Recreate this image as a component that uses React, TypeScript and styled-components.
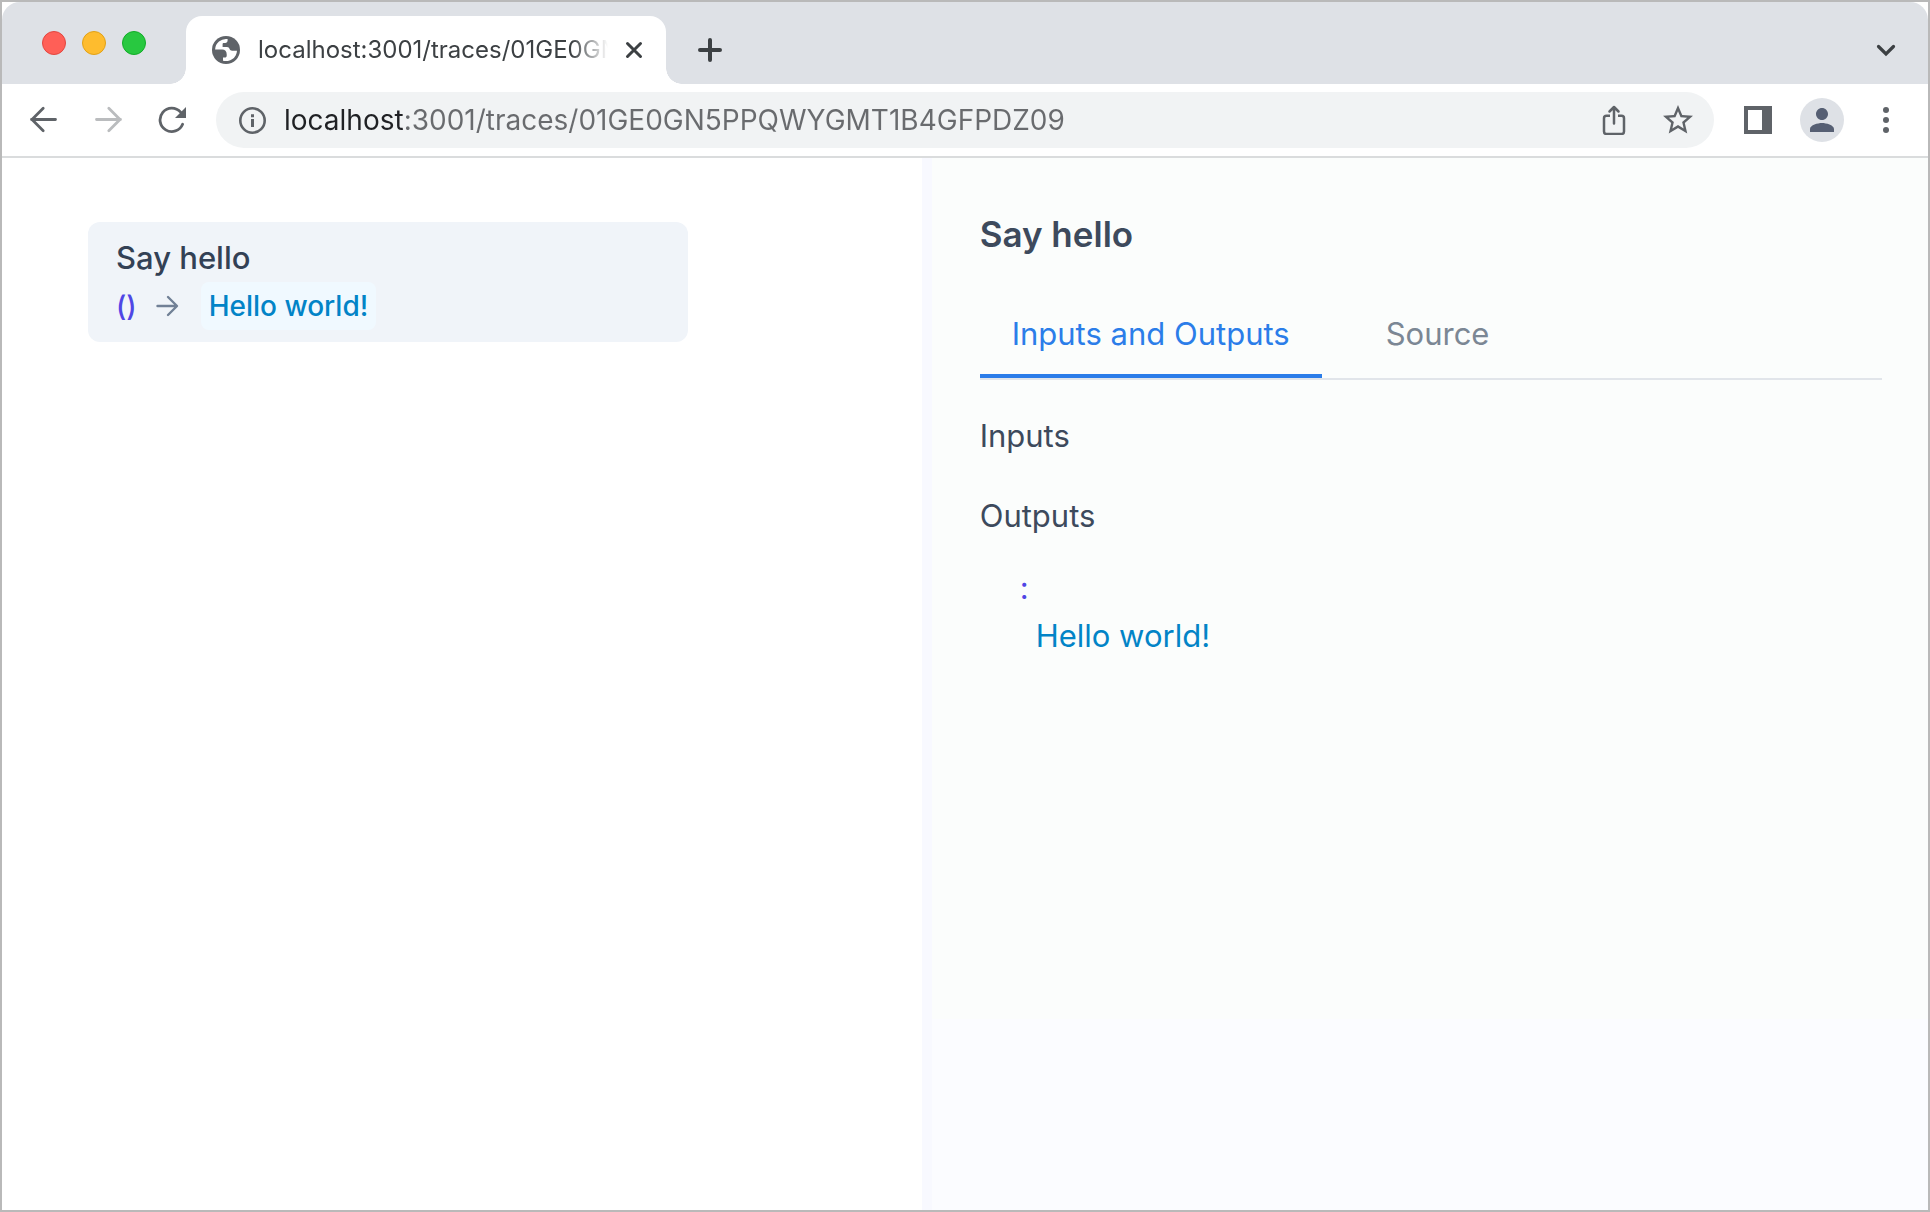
import React, { useState } from 'react';
import styled, { createGlobalStyle } from 'styled-components';
import { MdPerson, MdStarBorder } from 'react-icons/md';

const GlobalStyle = createGlobalStyle`
  *, *::before, *::after { box-sizing: border-box; }
  body {
    margin: 0;
    background: #ffffff;
    font-family: Inter, "Liberation Sans", sans-serif;
  }
  button {
    padding: 0;
    border: 0;
    background: none;
    font: inherit;
    color: inherit;
    cursor: pointer;
  }
  svg { display: block; flex: none; }
`;

const BrowserWindow = styled.div`
  display: flex;
  flex-direction: column;
  min-height: 100vh;
  border: 2px solid #b9b9b9;
  background: #ffffff;
`;

const TabStrip = styled.header`
  display: flex;
  align-items: flex-end;
  height: 82px;
  padding: 0 22px 0 40px;
  border-radius: 18px 18px 0 0;
  background: #dee1e6;
`;

const WindowControls = styled.div`
  display: flex;
  align-items: center;
  align-self: stretch;
  gap: 16px;
  margin-right: 40px;
`;

const WindowButton = styled.button<{ $fill: string; $edge: string }>`
  width: 24px;
  height: 24px;
  border: 1px solid ${(p) => p.$edge};
  border-radius: 50%;
  background: ${(p) => p.$fill};
`;

const BrowserTab = styled.div`
  position: relative;
  display: flex;
  align-items: center;
  width: 480px;
  height: 68px;
  padding: 0 16px 0 26px;
  border-radius: 16px 16px 0 0;
  background: #ffffff;
  color: #3c4043;

  &::before,
  &::after {
    content: "";
    position: absolute;
    bottom: 0;
    width: 16px;
    height: 16px;
  }
  &::before {
    right: 100%;
    background: radial-gradient(circle at 0 0, transparent 15.5px, #ffffff 16px);
  }
  &::after {
    left: 100%;
    background: radial-gradient(circle at 100% 0, transparent 15.5px, #ffffff 16px);
  }
`;

const BrowserTabTitle = styled.span`
  flex: 1;
  min-width: 0;
  margin: 0 10px 0 18px;
  overflow: hidden;
  white-space: nowrap;
  font-size: 24px;
  line-height: 32px;
  mask-image: linear-gradient(to left, transparent, #000 36px);
`;

const IconButton = styled.button<{ $size?: number; $color?: string }>`
  display: flex;
  flex: none;
  align-items: center;
  justify-content: center;
  width: ${(p) => p.$size ?? 40}px;
  height: ${(p) => p.$size ?? 40}px;
  color: ${(p) => p.$color ?? '#5f6368'};
`;

const StripActions = styled.div`
  display: flex;
  flex: 1;
  align-items: center;
  justify-content: space-between;
  height: 68px;
  padding-left: 24px;
`;

const Toolbar = styled.div`
  display: flex;
  align-items: center;
  gap: 24px;
  height: 74px;
  padding: 0 22px;
  border-bottom: 2px solid #dadcdd;
`;

const AddressBar = styled.form`
  display: flex;
  flex: 1;
  align-items: center;
  min-width: 0;
  height: 56px;
  padding: 0 16px 0 22px;
  border-radius: 28px;
  background: #f1f3f4;
  color: #5f6368;
`;

const AddressInput = styled.input`
  flex: 1;
  min-width: 0;
  height: 40px;
  margin: 0 24px 0 16px;
  padding: 0;
  border: 0;
  outline: 0;
  background: linear-gradient(to right, #202124 120px, #696b6e 120px);
  background-clip: text;
  color: transparent;
  font: 28px/40px Inter, "Liberation Sans", sans-serif;
`;

const AddressActions = styled.div`
  display: flex;
  gap: 24px;
`;

const Avatar = styled(IconButton)`
  margin: 0 -2px;
  border-radius: 50%;
  background: #dee1e6;
`;

const Workspace = styled.main`
  display: grid;
  flex: 1;
  grid-template-columns: 12fr 10px 13fr;
`;

const TraceList = styled.section`
  padding: 64px 86px;
`;

const TraceCard = styled.button`
  display: block;
  width: 600px;
  max-width: 100%;
  padding: 12px 28px;
  border-radius: 12px;
  background: #f0f4f9;
  text-align: left;
`;

const TraceName = styled.span`
  display: block;
  color: #334155;
  font-size: 31px;
  font-weight: 500;
  line-height: 48px;
`;

const Signature = styled.span`
  display: flex;
  align-items: center;
  color: #718096;
  font-size: 28px;
  font-weight: 500;
  line-height: 48px;
`;

const Args = styled.span`
  color: #4f46e5;
`;

const ArrowSlot = styled.span`
  margin: 0 22px 0 18px;
`;

const ResultPill = styled.span`
  padding: 0 8px;
  border-radius: 8px;
  background: #f0f9ff;
  color: #0284c7;
`;

const Divider = styled.div`
  background: #f8f9ff;
`;

const DetailColumn = styled.section`
  background: #fbfcff;
`;

const DetailPanel = styled.div`
  min-height: 71vh;
  padding: 48px 46px 32px 48px;
  background: #fbfdfc;
  color: #3d4a5c;
`;

const DetailTitle = styled.h1`
  margin: 0 0 32px;
  font-size: 35px;
  font-weight: 600;
  line-height: 56px;
`;

const TabList = styled.div`
  display: flex;
  gap: 32px;
  border-bottom: 2px solid #e1e5ea;
`;

const DetailTab = styled.button<{ $active: boolean }>`
  padding: 16px 32px;
  border-bottom: 4px solid ${(p) => (p.$active ? '#2b7de9' : 'transparent')};
  color: ${(p) => (p.$active ? '#2b7de9' : '#7b8794')};
  font-size: 31px;
  line-height: 48px;
`;

const TabContent = styled.div`
  font-size: 31px;
  line-height: 48px;
`;

const SectionTitle = styled.h2`
  margin: 32px 0 0;
  font: inherit;
`;

const OutputList = styled.dl`
  margin: 24px 0 0;
  padding-left: 40px;
`;

const OutputName = styled.dt`
  color: #4f46e5;
`;

const OutputValue = styled.dd`
  margin: 0 0 0 16px;
  color: #0284c7;
`;

const GlobeIcon = () => (
  <svg width="28" height="28" viewBox="0 0 28 28" aria-hidden="true">
    <circle cx="14" cy="14" r="14" fill="#5f6368" />
    <path
      fill="#fff"
      d="M3.1 13.6A11 11 0 0 1 15.6 3v1.6c0 1.4-1 2.4-2.4 2.4h-1.400c-.8 0-1.200.5-1.200 1.200v2.800h4.400c1.400 0 2.200.8 2.600 2 .4 1.100 1.300 1.700 2.500 1.700H25A11 11 0 0 1 11 24.700V21.600h1.800c1.200 0 1.900-.8 1.900-1.900v-1.400c0-2.700-1.700-4.700-4.500-4.700z"
    />
  </svg>
);

const CloseIcon = () => (
  <svg width="18" height="18" viewBox="0 0 18 18" stroke="#3c4043" strokeWidth="3" strokeLinecap="round" aria-hidden="true">
    <path d="M2.500 2.500l13 13M15.500 2.500l-13 13" />
  </svg>
);

const PlusIcon = () => (
  <svg width="24" height="24" viewBox="0 0 24 24" stroke="#3c4043" strokeWidth="4" strokeLinecap="round" aria-hidden="true">
    <path d="M12 2v20M2 12h20" />
  </svg>
);

const ChevronIcon = () => (
  <svg width="20" height="14" viewBox="0 0 20 14" fill="none" stroke="#3c4043" strokeWidth="3.200" strokeLinecap="round" aria-hidden="true">
    <path d="M2.500 3.500L10 11l7.500-7.500" />
  </svg>
);

const NavArrow = ({ forward }: { forward?: boolean }) => (
  <svg width="28" height="28" viewBox="0 0 28 28" fill="none" stroke="currentColor" strokeWidth="2.800" strokeLinecap="round" aria-hidden="true">
    <path d={forward ? 'M2.500 13.500h24M14.800 2.300L26 13.500 14.800 24.700' : 'M25.500 13.500h-24M13.200 2.300L2 13.500l11.200 11.200'} />
  </svg>
);

const ReloadIcon = () => (
  <svg width="28" height="28" viewBox="0 0 28 28" aria-hidden="true">
    <path d="M24.600 18.200A11.700 11.700 0 1 1 22.600 6.200" fill="none" stroke="currentColor" strokeWidth="2.800" strokeLinecap="round" />
    <path d="M28 1v11H17z" fill="currentColor" />
  </svg>
);

const InfoIcon = () => (
  <svg width="30" height="30" viewBox="0 0 30 30" aria-hidden="true">
    <circle cx="14.500" cy="15.500" r="12.200" fill="none" stroke="currentColor" strokeWidth="2.600" />
    <path d="M13 9.200h3v3h-3zM13 14h3v8h-3z" fill="currentColor" />
  </svg>
);

const ShareIcon = () => (
  <svg width="30" height="30" viewBox="0 0 30 30" fill="none" stroke="#5f6368" strokeWidth="2.500" strokeLinecap="round" strokeLinejoin="round" aria-hidden="true">
    <path strokeLinecap="butt" d="M11 10.800H7.500a2.500 2.500 0 0 0-2.500 2.500v13.200a2.500 2.500 0 0 0 2.500 2.500h15a2.500 2.500 0 0 0 2.500-2.500V13.300a2.500 2.500 0 0 0-2.500-2.500H19" />
    <path d="M15 18.500V2.500M10.500 6.500L15 2l4.500 4.500" />
  </svg>
);

const SidePanelIcon = () => (
  <svg width="28" height="28" viewBox="0 0 28 28" aria-hidden="true">
    <path fill="currentColor" fillRule="evenodd" d="M0 0h28v28H0zM4 4v20h14V4z" />
  </svg>
);

const MenuIcon = () => (
  <svg width="6" height="26" viewBox="0 0 6 26" fill="currentColor" aria-hidden="true">
    <circle cx="3" cy="3" r="3" />
    <circle cx="3" cy="13" r="3" />
    <circle cx="3" cy="23" r="3" />
  </svg>
);

const ArrowIcon = () => (
  <svg width="24" height="24" viewBox="0 0 24 24" fill="none" stroke="currentColor" strokeWidth="2.400" strokeLinecap="round" strokeLinejoin="round" aria-hidden="true">
    <path d="M2.500 12h19M13 3l9 9-9 9" />
  </svg>
);

const WINDOW_BUTTONS = [
  { label: 'Close window', fill: '#ff5f57', edge: '#e2463f' },
  { label: 'Minimize window', fill: '#febc2e', edge: '#e1a116' },
  { label: 'Zoom window', fill: '#28c840', edge: '#12ac28' },
];

const TRACE_URL = 'localhost:3001/traces/01GE0GN5PPQWYGMT1B4GFPDZ09';

const DETAIL_TABS = ['Inputs and Outputs', 'Source'];

export default function App() {
  const [activeTab, setActiveTab] = useState(DETAIL_TABS[0]);

  return (
    <>
      <GlobalStyle />
      <BrowserWindow>
        <TabStrip>
          <WindowControls>
            {WINDOW_BUTTONS.map((b) => (
              <WindowButton key={b.label} aria-label={b.label} $fill={b.fill} $edge={b.edge} />
            ))}
          </WindowControls>
          <BrowserTab>
            <GlobeIcon />
            <BrowserTabTitle>localhost:3001/traces/01GE0GN5</BrowserTabTitle>
            <IconButton $size={32} aria-label="Close tab">
              <CloseIcon />
            </IconButton>
          </BrowserTab>
          <StripActions>
            <IconButton aria-label="New tab">
              <PlusIcon />
            </IconButton>
            <IconButton aria-label="Search tabs">
              <ChevronIcon />
            </IconButton>
          </StripActions>
        </TabStrip>

        <Toolbar>
          <IconButton aria-label="Back">
            <NavArrow />
          </IconButton>
          <IconButton aria-label="Forward" $color="#babcbe">
            <NavArrow forward />
          </IconButton>
          <IconButton aria-label="Reload">
            <ReloadIcon />
          </IconButton>
          <AddressBar onSubmit={(e) => e.preventDefault()}>
            <InfoIcon />
            <AddressInput type="text" aria-label="Address" defaultValue={TRACE_URL} spellCheck={false} />
            <AddressActions>
              <IconButton type="button" aria-label="Share">
                <ShareIcon />
              </IconButton>
              <IconButton type="button" aria-label="Bookmark">
                <MdStarBorder size={36} />
              </IconButton>
            </AddressActions>
          </AddressBar>
          <IconButton aria-label="Side panel">
            <SidePanelIcon />
          </IconButton>
          <Avatar $size={44} $color="#565f73" aria-label="Profile">
            <MdPerson size={36} />
          </Avatar>
          <IconButton aria-label="Menu">
            <MenuIcon />
          </IconButton>
        </Toolbar>

        <Workspace>
          <TraceList>
            <TraceCard>
              <TraceName>Say hello</TraceName>
              <Signature>
                <Args>()</Args>
                <ArrowSlot>
                  <ArrowIcon />
                </ArrowSlot>
                <ResultPill>Hello world!</ResultPill>
              </Signature>
            </TraceCard>
          </TraceList>
          <Divider role="separator" />
          <DetailColumn>
            <DetailPanel>
              <DetailTitle>Say hello</DetailTitle>
              <TabList role="tablist">
                {DETAIL_TABS.map((name) => (
                  <DetailTab
                    key={name}
                    role="tab"
                    aria-selected={name === activeTab}
                    $active={name === activeTab}
                    onClick={() => setActiveTab(name)}
                  >
                    {name}
                  </DetailTab>
                ))}
              </TabList>
              <TabContent role="tabpanel">
                <SectionTitle>Inputs</SectionTitle>
                <SectionTitle>Outputs</SectionTitle>
                <OutputList>
                  <OutputName>:</OutputName>
                  <OutputValue>Hello world!</OutputValue>
                </OutputList>
              </TabContent>
            </DetailPanel>
          </DetailColumn>
        </Workspace>
      </BrowserWindow>
    </>
  );
}
